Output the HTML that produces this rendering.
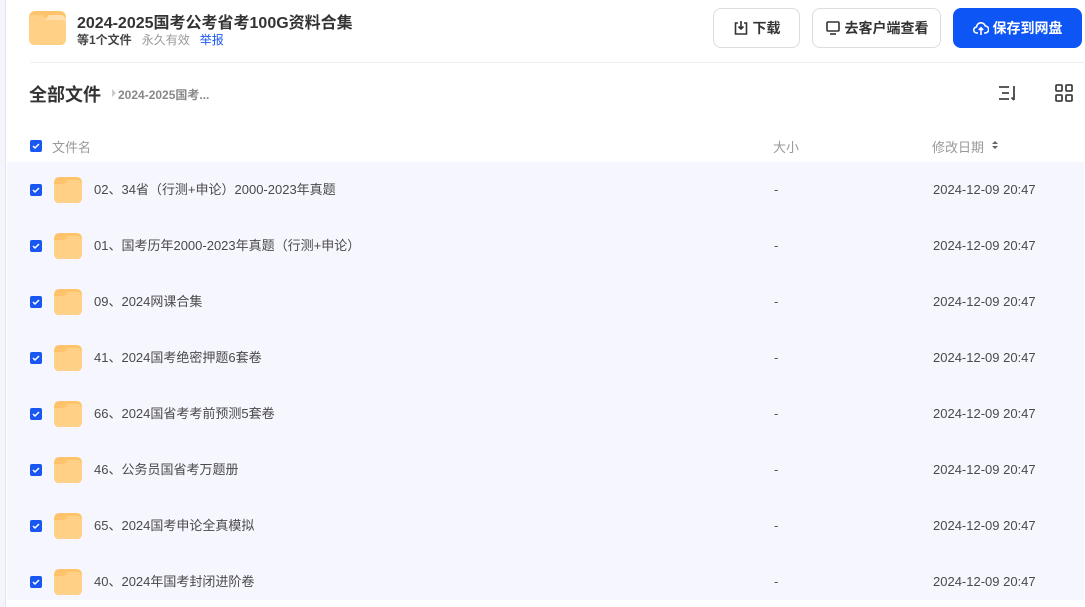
<!DOCTYPE html>
<html><head><meta charset="utf-8"><style>
*{margin:0;padding:0;box-sizing:border-box}
body{width:1085px;height:607px;overflow:hidden;background:#f3f4fc;font-family:"Liberation Sans","Noto Sans CJK SC",sans-serif;position:relative}
.main{position:absolute;left:5px;top:0;width:1080px;height:607px;background:#fff;border-left:1px solid #e4e5f0}
.abs{position:absolute}
.title{left:71px;top:9px;font-size:16px;font-weight:bold;color:#333;white-space:nowrap}
.sub{left:71px;top:31px;font-size:12px;white-space:nowrap}
.btn{top:8px;height:40px;border:1px solid #dcdde3;border-radius:8px;font-size:14px;color:#333;display:flex;align-items:center;justify-content:center;gap:4px;font-weight:bold}
.hr{left:24px;top:62px;width:1054px;height:1px;background:#eceef2}
.cb{width:12px;height:12px;background:#1a56f0;border-radius:2px;display:flex;align-items:center;justify-content:center}
.rows{left:1px;top:162px;width:1077px;height:438px;background:#f5f6fe;overflow:hidden}
.row{position:relative;height:56px}
.row .cb{position:absolute;left:23px;top:22px}
.row .fd{position:absolute;left:47px;top:15px}
.row .nm,.row .sz,.row .dt{position:absolute;top:18px;font-size:13px;line-height:20px;white-space:nowrap}
.row .nm{left:87px;color:#4a4a4a}
.row .sz{left:767px;color:#555}
.row .dt{left:926px;color:#4a4a4a}
</style></head><body>
<div class="main">
<svg class="abs" style="left:23px;top:11px" width="37" height="34" viewBox="0 0 37 34"><rect x="0" y="0" width="37" height="34" rx="6" fill="#ffc46b"/><path d="M0 8 Q0 4 4 4 L14 4 L18 9 L33 9 Q37 9 37 13 L37 28 Q37 34 31 34 L6 34 Q0 34 0 28Z" fill="#ffd085"/><path d="M4 9 L33 9 Q37 9 37 13 L37 10 Q37 4 31 4 L20 4 L16 9Z" fill="#fff2da" opacity=".6"/></svg>
<div class="abs title">2024-2025国考公考省考100G资料合集</div>
<div class="abs sub"><b style="color:#444">等1个文件</b><span style="color:#999;margin-left:10px">永久有效</span><span style="color:#1a56f0;margin-left:10px">举报</span></div>
<div class="abs btn" style="left:707px;width:87px"><svg width="16" height="16" viewBox="0 0 16 16" fill="none" stroke="#333" stroke-width="1.6"><path d="M5 3H2.5v11h11V3H11"/><path d="M8 1v8M5.5 6.5L8 9l2.5-2.5"/></svg>下载</div>
<div class="abs btn" style="left:806px;width:129px"><svg width="16" height="16" viewBox="0 0 16 16" fill="none" stroke="#333" stroke-width="1.6"><rect x="2" y="2" width="12" height="9" rx="1"/><path d="M5 14h6"/></svg>去客户端查看</div>
<div class="abs btn" style="left:947px;width:129px;background:#0d55f5;border-color:#0d55f5;color:#fff"><svg width="16" height="16" viewBox="0 0 16 16" fill="none" stroke="#fff" stroke-width="1.6"><path d="M5 13H4a3 3 0 0 1-.5-6A4.5 4.5 0 0 1 12.3 6 3.5 3.5 0 0 1 12 13h-1"/><path d="M8 15V8M5.8 10L8 7.8 10.2 10"/></svg>保存到网盘</div>
<div class="abs hr"></div>
<div class="abs" style="left:23px;top:81px;font-size:18px;font-weight:bold;color:#333">全部文件</div>
<div class="abs" style="left:106px;top:89px;width:0;height:0;border-left:4px solid #ccc;border-top:4px solid transparent;border-bottom:4px solid transparent"></div>
<div class="abs" style="left:112px;top:86px;font-size:12px;font-weight:bold;color:#888">2024-2025国考...</div>
<svg class="abs" style="left:992px;top:84px" width="20" height="18" viewBox="0 0 20 18" fill="none" stroke="#444" stroke-width="1.8"><path d="M1 3h10M4 9h7M1 15h10M16 2v14M13.5 13.5L16 16"/></svg>
<svg class="abs" style="left:1049px;top:84px" width="18" height="18" viewBox="0 0 18 18" fill="none" stroke="#444" stroke-width="1.8"><rect x="1" y="1" width="6" height="6" rx="1"/><rect x="11" y="1" width="6" height="6" rx="1"/><rect x="1" y="11" width="6" height="6" rx="1"/><rect x="11" y="11" width="6" height="6" rx="1"/></svg>
<div class="abs cb" style="left:24px;top:140px"><svg width="8" height="8" viewBox="0 0 8 8"><path d="M1 4l2 2 4-4" stroke="#fff" stroke-width="1.5" fill="none"/></svg></div>
<div class="abs" style="left:46px;top:137px;font-size:13px;color:#999">文件名</div>
<div class="abs" style="left:767px;top:137px;font-size:13px;color:#999">大小</div>
<div class="abs" style="left:926px;top:137px;font-size:13px;color:#999">修改日期</div>
<div class="abs" style="left:986px;top:141px;width:0;height:0;border-bottom:3px solid #666;border-left:3px solid transparent;border-right:3px solid transparent"></div>
<div class="abs" style="left:986px;top:146px;width:0;height:0;border-top:3px solid #666;border-left:3px solid transparent;border-right:3px solid transparent"></div>
<div class="abs rows">
<div class="row"><div class="cb"><svg width="8" height="8" viewBox="0 0 8 8"><path d="M1 4l2 2 4-4" stroke="#fff" stroke-width="1.5" fill="none"/></svg></div><svg class="fd" width="28" height="26" viewBox="0 0 28 26"><rect width="28" height="26" rx="5" fill="#ffc46b"/><path d="M0 7h10l4-4h9q5 0 5 5v13q0 5-5 5H5q-5 0-5-5z" fill="#ffd085"/></svg><div class="nm">02、34省（行测+申论）2000-2023年真题</div><div class="sz">-</div><div class="dt">2024-12-09 20:47</div></div>
<div class="row"><div class="cb"><svg width="8" height="8" viewBox="0 0 8 8"><path d="M1 4l2 2 4-4" stroke="#fff" stroke-width="1.5" fill="none"/></svg></div><svg class="fd" width="28" height="26" viewBox="0 0 28 26"><rect width="28" height="26" rx="5" fill="#ffc46b"/><path d="M0 7h10l4-4h9q5 0 5 5v13q0 5-5 5H5q-5 0-5-5z" fill="#ffd085"/></svg><div class="nm">01、国考历年2000-2023年真题（行测+申论）</div><div class="sz">-</div><div class="dt">2024-12-09 20:47</div></div>
<div class="row"><div class="cb"><svg width="8" height="8" viewBox="0 0 8 8"><path d="M1 4l2 2 4-4" stroke="#fff" stroke-width="1.5" fill="none"/></svg></div><svg class="fd" width="28" height="26" viewBox="0 0 28 26"><rect width="28" height="26" rx="5" fill="#ffc46b"/><path d="M0 7h10l4-4h9q5 0 5 5v13q0 5-5 5H5q-5 0-5-5z" fill="#ffd085"/></svg><div class="nm">09、2024网课合集</div><div class="sz">-</div><div class="dt">2024-12-09 20:47</div></div>
<div class="row"><div class="cb"><svg width="8" height="8" viewBox="0 0 8 8"><path d="M1 4l2 2 4-4" stroke="#fff" stroke-width="1.5" fill="none"/></svg></div><svg class="fd" width="28" height="26" viewBox="0 0 28 26"><rect width="28" height="26" rx="5" fill="#ffc46b"/><path d="M0 7h10l4-4h9q5 0 5 5v13q0 5-5 5H5q-5 0-5-5z" fill="#ffd085"/></svg><div class="nm">41、2024国考绝密押题6套卷</div><div class="sz">-</div><div class="dt">2024-12-09 20:47</div></div>
<div class="row"><div class="cb"><svg width="8" height="8" viewBox="0 0 8 8"><path d="M1 4l2 2 4-4" stroke="#fff" stroke-width="1.5" fill="none"/></svg></div><svg class="fd" width="28" height="26" viewBox="0 0 28 26"><rect width="28" height="26" rx="5" fill="#ffc46b"/><path d="M0 7h10l4-4h9q5 0 5 5v13q0 5-5 5H5q-5 0-5-5z" fill="#ffd085"/></svg><div class="nm">66、2024国省考考前预测5套卷</div><div class="sz">-</div><div class="dt">2024-12-09 20:47</div></div>
<div class="row"><div class="cb"><svg width="8" height="8" viewBox="0 0 8 8"><path d="M1 4l2 2 4-4" stroke="#fff" stroke-width="1.5" fill="none"/></svg></div><svg class="fd" width="28" height="26" viewBox="0 0 28 26"><rect width="28" height="26" rx="5" fill="#ffc46b"/><path d="M0 7h10l4-4h9q5 0 5 5v13q0 5-5 5H5q-5 0-5-5z" fill="#ffd085"/></svg><div class="nm">46、公务员国省考万题册</div><div class="sz">-</div><div class="dt">2024-12-09 20:47</div></div>
<div class="row"><div class="cb"><svg width="8" height="8" viewBox="0 0 8 8"><path d="M1 4l2 2 4-4" stroke="#fff" stroke-width="1.5" fill="none"/></svg></div><svg class="fd" width="28" height="26" viewBox="0 0 28 26"><rect width="28" height="26" rx="5" fill="#ffc46b"/><path d="M0 7h10l4-4h9q5 0 5 5v13q0 5-5 5H5q-5 0-5-5z" fill="#ffd085"/></svg><div class="nm">65、2024国考申论全真模拟</div><div class="sz">-</div><div class="dt">2024-12-09 20:47</div></div>
<div class="row"><div class="cb"><svg width="8" height="8" viewBox="0 0 8 8"><path d="M1 4l2 2 4-4" stroke="#fff" stroke-width="1.5" fill="none"/></svg></div><svg class="fd" width="28" height="26" viewBox="0 0 28 26"><rect width="28" height="26" rx="5" fill="#ffc46b"/><path d="M0 7h10l4-4h9q5 0 5 5v13q0 5-5 5H5q-5 0-5-5z" fill="#ffd085"/></svg><div class="nm">40、2024年国考封闭进阶卷</div><div class="sz">-</div><div class="dt">2024-12-09 20:47</div></div>
</div>
</div>
</body></html>
